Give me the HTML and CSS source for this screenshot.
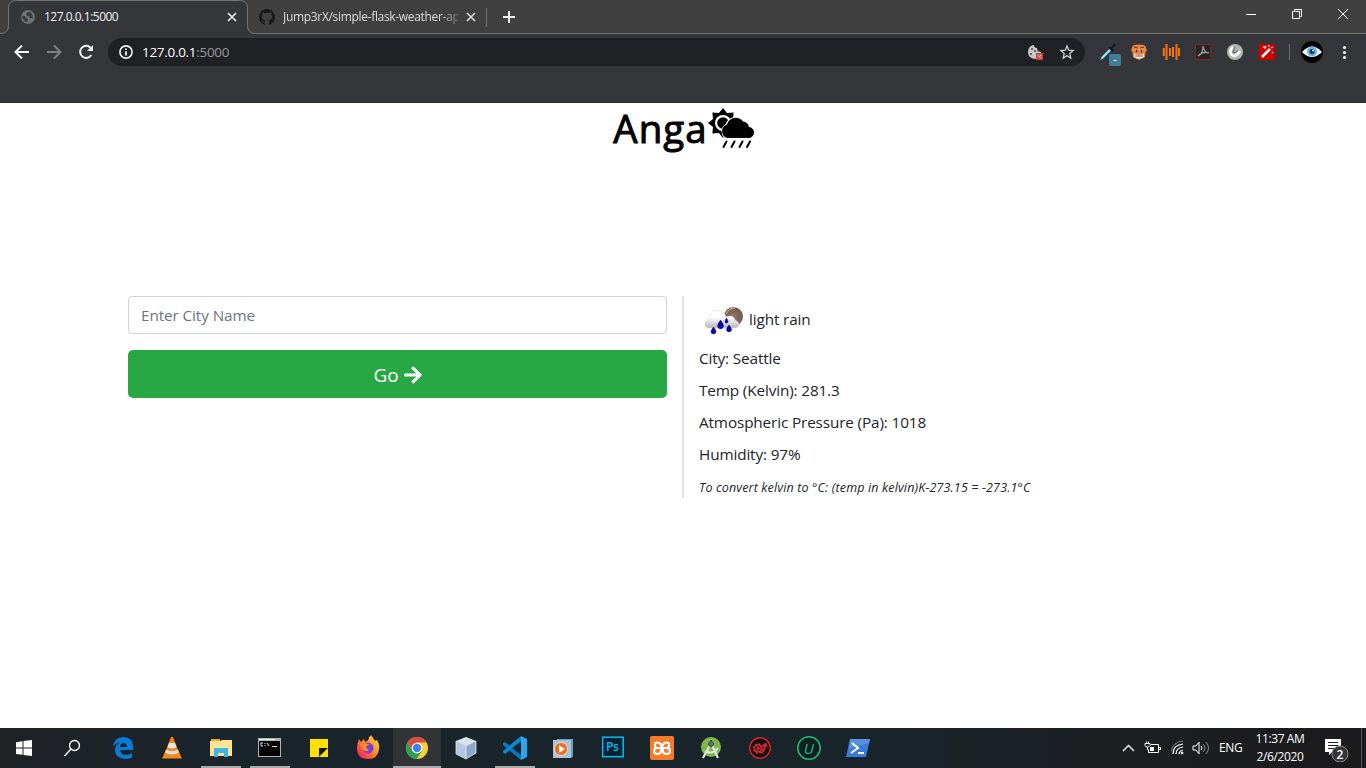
FILE: index.html
```html
<!DOCTYPE html>
<html lang="en">
<head>
<meta charset="utf-8">
<title>127.0.0.1:5000</title>
<link rel="stylesheet" href="styles.css">
</head>
<body>
<div class="screen">
  <header class="browser">
    <div class="tabs">
      <svg class="tab-line" width="1366" height="34" fill="none"><path d="M1 34q7.500-1 7.500-8.500V8q0-7.500 8-7.500h223q8 0 8 7.500v17.500q0 8 8 8V34Z" fill="#35363a"/><path d="M0 33.500h1q7.500 0 7.500-8V8q0-7.500 8-7.500h223q8 0 8 7.500v17.500q0 8 8 8h1111" stroke="#727470"/></svg>
      <div class="tab current">
        <svg class="favicon" width="16" height="16"><circle cx="8" cy="8" r="7" fill="#6e7074"/><path d="M2 7l3 0 1 2 2 1v2l-2 1-3-3-1-2M8 3l-2 2 1 2 2 0 1 2 3 0-1-4-2-2" fill="#3b3c40"/></svg>
        <span class="tab-title">127.0.0.1:5000</span>
        <svg class="close" width="10" height="10"><path d="M1 1l8 8M9 1l-8 8" stroke="#f1f3f4" stroke-width="1.700"/></svg>
      </div>
      <div class="tab second">
        <svg class="favicon" width="16" height="16" viewBox="0 0 16 16"><path fill="#191a1b" d="M8 0C3.580 0 0 3.580 0 8c0 3.540 2.290 6.530 5.470 7.590.4.070.55-.17.55-.38v-1.490c-2.010.37-2.530-.49-2.690-.94-.09-.23-.48-.94-.82-1.130-.28-.15-.68-.52-.01-.53.63-.01 1.080.58 1.230.82.72 1.210 1.870.87 2.330.66.07-.52.28-.87.51-1.070-1.780-.2-3.640-.89-3.640-3.950 0-.87.31-1.590.82-2.150-.08-.2-.36-1.020.08-2.120 0 0 .67-.21 2.200.82a7.600 7.600 0 0 1 4 0c1.530-1.040 2.200-.82 2.200-.82.44 1.100.16 1.920.08 2.120.51.56.82 1.270.82 2.150 0 3.070-1.870 3.750-3.650 3.950.29.25.54.73.54 1.480v2.190c0 .21.15.46.55.38A8 8 0 0 0 16 8c0-4.420-3.580-8-8-8z"/></svg>
        <span class="tab-title fade">Jump3rX/simple-flask-weather-ap</span>
        <svg class="close" width="10" height="10"><path d="M1 1l8 8M9 1l-8 8" stroke="#dadce0" stroke-width="1.600"/></svg>
      </div>
      <svg class="new-tab" width="12" height="12"><path d="M6 0v12M0 6h12" stroke="#eee" stroke-width="2"/></svg>
      <svg class="window-controls" width="106" height="14" fill="none" stroke="#fff"><path d="M1 7.500h10M47.500 4.500h7v7h-7zM49.500 4v-1.500h7v7H55M93 2l10 10M103 2L93 12"/></svg>
    </div>
    <div class="toolbar">
      <svg class="nav" width="108" height="36" fill="none" stroke-width="2"><path stroke="#f1f3f4" d="M29 18H17M22 11.500L15.500 18l6.500 6.500"/><path stroke="#808185" d="M47 18h12M54 11.500l6.500 6.500-6.500 6.500"/><path stroke="#f1f3f4" d="M91.300 21a6 6 0 1 1-.8-7.300"/><path fill="#f1f3f4" d="M93 11v6h-6z"/></svg>
      <div class="address">
        <svg width="14" height="14" fill="none" stroke="#f1f3f4"><circle cx="7" cy="7" r="6.100" stroke-width="1.600"/><path d="M7 6.200v4.300M7 3.500v1.600" stroke-width="1.800"/></svg>
        <span class="url">127.0.0.1<span>:5000</span></span>
        <svg class="address-icons" width="48" height="18"><path d="M7 2q0 3 3 3 0 3 4 4v4H9v3Q1 16 1 9 1 3 7 2Z" fill="#c9c9c9"/><g fill="#45464a"><circle cx="5" cy="6" r="1"/><circle cx="8" cy="8" r="1"/><circle cx="4" cy="11" r="1"/><circle cx="11" cy="8" r=".8"/></g><path fill="#e23e35" d="M9 10h7v7H9z"/><path d="M11 12l3 3m0-3l-3 3" stroke="#fff"/><path d="M40 3l1.700 4.200 4.500.4-3.400 3 1 4.500-3.800-2.400-3.800 2.400 1-4.500-3.400-3 4.500-.4Z" fill="none" stroke="#d0d1d4" stroke-width="1.300"/></svg>
      </div>
      <svg class="extensions" width="266" height="32">
        <path d="M2 22L10 14" stroke="#4db8e8" stroke-width="2.500"/><path d="M0 24l2-1 9-9-1-1-8 8Z" fill="#b8e6fa"/><path d="M9 11l4 4M11 13l4-5" stroke="#15191c" stroke-width="2"/><rect x="9" y="18" width="12" height="12" rx="2" fill="#437c99"/><path d="M13.500 24.500h3" stroke="#fff"/>
        <g><circle cx="33.500" cy="14" r="2.300" fill="#e98545"/><circle cx="44.500" cy="14" r="2.300" fill="#e98545"/><path d="M32 11l2-2q5-1 10 0l2 2-1 10-6 3-6-3Z" fill="#e9873e"/><path d="M34 18q5 2 10 0v3q-5 3-10 0Z" fill="#fff"/><path d="M35 20h8" stroke="#823919"/><path d="M35 13h3v3h-3zM40 13h3v3h-3z" fill="#f7d2a6"/><path d="M36 14h1v2h-1zM41 14h1v2h-1zM34 11l4 1m6-1l-4 1" stroke="#7f201a"/></g>
        <path d="M63.800 12v8M66.500 8v16M70 12v8M73 11v10M76.500 8v16M79 12v8" stroke="#f57213" stroke-width="2"/>
        <g fill="none"><path d="M95.500 8.500h15v15h-15z" fill="#2b2426" stroke="#792820"/><path d="M98 20q5-2 5-10 1 7 6 7-6-2-11 3" stroke="#a4a0a1" stroke-width="1.200"/></g>
        <circle cx="135" cy="16" r="8" fill="#b4b4b4"/><path d="M133 11q-4 3-2 7 4 5 9-3" fill="none" stroke="#fff" stroke-width="2.500"/><path d="M135 11l-2 5q2 2 5-2" fill="none" stroke="#707070" stroke-width="1.200"/>
        <path fill="#cb0000" d="M159 8h16v16h-16z"/><path d="M162 21l8-8" stroke="#fff" stroke-width="2.500"/><path d="M169 9v2M173 11l-2 1M172 16l1 1M163 11h2M166 10l-1 3" stroke="#ffdada" stroke-width="1.300"/>
        <path d="M189.500 8v16" stroke="#66686c"/><circle cx="212" cy="16" r="11" fill="#000"/><path d="M202 16q10-11 20 0-10 10-20 0" fill="#f6f8fb"/><circle cx="212" cy="15.500" r="5" fill="#65b6ef"/><circle cx="212" cy="15.500" r="2.500" fill="#183155"/><circle cx="213" cy="14.500" r="1" fill="#fff"/>
        <g fill="#f1f3f4"><circle cx="244.500" cy="11.500" r="1.600"/><circle cx="244.500" cy="16.500" r="1.600"/><circle cx="244.500" cy="21.500" r="1.600"/></g>
      </svg>
    </div>
  </header>

  <main class="page">
    <h1 class="brand"><span>Anga</span><svg width="46" height="42"><path d="M15 0l4.100 5 6.500-.6-.6 6.500 5 4.100-5 4.100.6 6.500-6.500-.6L15 30l-4.100-5-6.500.6.6-6.500L0 15l5-4.100-.6-6.500 6.500.6Z"/><circle cx="15" cy="15" r="8" fill="#fff"/><circle cx="15" cy="15" r="5.800"/><path d="M20 30a7 7 0 0 1-1-13 9 9 0 0 1 16-3 7 7 0 0 1 6 5 5.500 5.500 0 0 1-1 11Z" stroke="#fff" stroke-width="3"/><path d="M19.500 30a7 7 0 0 1-.5-13.500 9 9 0 0 1 16-3 7 7 0 0 1 6 5.500 5.500 5.500 0 0 1-1 11Z"/><path d="M18.500 33.500l-3 5.500M26.500 33.500l-3 5.500M34.500 33.500l-3 5.500M42 33.500L39 39" stroke="#000" stroke-width="2" stroke-linecap="round"/></svg></h1>
    <div class="columns">
      <form class="search-form">
        <input class="city-input" type="text" placeholder="Enter City Name" aria-label="City name">
        <button class="go" type="button"><span>Go</span><svg width="18" height="20" viewBox="0 0 448 512" fill="#fff"><path d="M190.500 66.900l22.200-22.200c9.400-9.400 24.600-9.400 33.900 0L441 239c9.400 9.400 9.400 24.600 0 33.900L246.600 467.300c-9.400 9.400-24.600 9.400-33.900 0l-22.200-22.200c-9.500-9.500-9.300-25 .4-34.300L311.400 296H24c-13.300 0-24-10.700-24-24v-32c0-13.300 10.700-24 24-24h287.400L190.900 101.200c-9.800-9.300-10-24.800-.4-34.300z"/></svg></button>
      </form>
      <section class="result">
        <div class="summary"><svg width="50" height="50"><defs><linearGradient id="cloud" x1="0" y1="0" x2="0" y2="1"><stop offset=".4" stop-color="#fff"/><stop offset="1" stop-color="#b5b5b5"/></linearGradient><radialGradient id="moon"><stop stop-color="#8e7566"/><stop offset="1" stop-color="#75594a"/></radialGradient></defs><circle cx="34.500" cy="20.500" r="9.500" fill="url(#moon)"/><path d="M27 18q3-6 9-6" fill="none" stroke="#d2c9c2"/><path d="M9 32q-4-1-3-5 1-4 4-4 1-7 7-9 8 0 10 7 7-3 9 3l3 2q2 3 0 5l-2 1Z" fill="url(#cloud)" stroke="#dedede" stroke-width=".7"/><g fill="#0000b8" stroke="#111155" stroke-width=".5"><path d="M14.500 31q5 6 0 7-5-1 0-7ZM21.500 24q6 8 0 9-6-1 0-9ZM27.500 22q3 5 0 5-3 0 0-5ZM30 29q5 6 0 7-5-1 0-7Z"/></g></svg><span>light rain</span></div>
        <p class="t-city">City: Seattle</p>
        <p class="t-temp">Temp (Kelvin): 281.3</p>
        <p class="t-pressure">Atmospheric Pressure (Pa): 1018</p>
        <p class="t-humidity">Humidity: 97%</p>
        <p class="note">To convert kelvin to °C: (temp in kelvin)K-273.15 = -273.1°C</p>
      </section>
    </div>
  </main>

  <footer class="taskbar">
    <div class="apps">
      <svg class="app" viewBox="0 0 48 40"><path fill="#fff" d="M15 14.200l6.500-.9v6.200H15zM22.500 13l8.500-1v7.500h-8.500zM15 20.500h6.500v6.200L15 26zM22.500 20.500H31V28l-8.500-1z"/></svg>
      <svg class="app" viewBox="0 0 48 40"><g fill="none" stroke="#fff" stroke-width="1.300"><circle cx="24.500" cy="17.500" r="5"/><path d="M21 21l-6.500 7"/></g></svg>
      <svg class="app" viewBox="0 0 48 40"><path fill="#087bd8" d="M14 19q1-10 10.500-10Q34 9 34 19v3H21q1 5 6 5 3 0 6-2v4.500Q30 31 26 31q-10-1-10-9 0-5 5-8-5 1-7 5Zm7 0h7q-.4-4-3.600-4-3 0-3.400 4Z"/></svg>
      <svg class="app" viewBox="0 0 48 40"><path d="M23 9h2l7 18q-8 4-16 0Z" fill="#f38610"/><path d="M21 15h6l1.500 4.500q-4.500 2-9 0Z" fill="#e5e5e5"/><path d="M17 24l-3 6.500h20L31 24q-7 4-14 0Z" fill="#f28b19"/><path d="M18 21.500q6 3 12 0l1 3q-7 4-14 0" fill="#ddd"/></svg>
      <svg class="app running" viewBox="0 0 48 40"><path fill="#e3ad26" d="M14 11h9v3h-9z"/><path fill="#ffe493" d="M13 13h10l2-1h10v16H13z"/><path d="M17 20h14v9h-4v-4h-6v4h-4z" fill="#38b7e8"/></svg>
      <svg class="app running" viewBox="0 0 48 40"><path fill="#aeb5b8" d="M12 10h23v19H12z"/><path fill="#050505" d="M13 13h21v15H13z"/><path fill="#f4f4f4" d="M13 11h16v1H13z"/><path fill="none" stroke="#ddd" d="M17 15h-2v3h2M19 15v1M19 17v1M21 15l2 3M26 18.500h5"/></svg>
      <svg class="app" viewBox="0 0 48 40"><path fill="#ffe000" d="M15 11h18v9l-9 9h-9z"/><path fill="#13171a" d="M24 20h9l-9 9z"/><path fill="#ffe000" d="M33 20v9h-9z"/></svg>
      <svg class="app" viewBox="0 0 48 40"><defs><linearGradient id="fire" x1="1" y1="0" x2="0" y2="1"><stop stop-color="#ffe43c"/><stop offset=".45" stop-color="#ff9028"/><stop offset=".8" stop-color="#ff3950"/><stop offset="1" stop-color="#e52480"/></linearGradient></defs><path fill="url(#fire)" d="M15 11l2 3 3-3 1 3q4-1 4-5 2-1 2-2 2 3 4 6l2-1q3 5 2 9-1 10-11 10-11 0-11-11 0-5 2-9Z"/><circle cx="24" cy="20" r="5.500" fill="#7840d5"/><path d="M16 16q6-2 10 1-4 0-4 3l3 2q-3 3-7-1Z" fill="#ff8b29"/></svg>
      <svg class="app running focused" viewBox="0 0 48 40"><circle cx="24" cy="20" r="11" fill="#f9cf36"/><path fill="#db4b3e" d="M14.500 14.500A11 11 0 0 1 33.500 14.500H24l-5 8Z"/><path fill="#299e57" d="M14.500 14.500A11 11 0 0 0 23.500 31L29 23q-5 5-10-.5Z"/><circle cx="24" cy="20" r="5.300" fill="#fff"/><circle cx="24" cy="20" r="4.200" fill="#4282ed"/></svg>
      <svg class="app" viewBox="0 0 48 40"><path fill="#d6e7e6" d="M24 9l10 4-10 5-10-5Z"/><path fill="#b5c8df" d="M14 13l10 5v13l-10-5Z"/><path fill="#8da9ca" d="M34 13l-10 5v13l10-6Z"/><path d="M14 13l10 5 10-5M24 18v13M14 13v13l10 5 10-6V13" fill="none" stroke="#e1ebf8" stroke-width=".8"/></svg>
      <svg class="app running" viewBox="0 0 48 40"><path fill="#0878c5" d="M12 15l2-1 16 13v5L12 17Z"/><path fill="#0b87d6" d="M12 24l2 2 16-13V8L12 23Z"/><path fill="#28a9ef" d="M30 8l6 3v18l-6 3Z"/></svg>
      <svg class="app" viewBox="0 0 48 40"><path fill="#6e9dbc" d="M17 11h16v18l-3 1V12H17z"/><path fill="#a7c6dc" d="M13 12h18v18H13z"/><circle cx="21" cy="21" r="6.500" fill="#f36b14" stroke="#d9dfdf"/><path d="M19 17l6 4-6 4Z" fill="#fff"/></svg>
      <svg class="app" viewBox="0 0 48 40"><rect x="13.700" y="9.200" width="20.500" height="19.500" fill="#062233" stroke="#08bcee" stroke-width="1.500"/><text x="17" y="23" class="ps">Ps</text></svg>
      <svg class="app" viewBox="0 0 48 40"><rect x="12" y="8" width="24" height="24" rx="2" fill="#f47b27"/><path d="M19.500 14.500q-3 0-2.500 3 0 2 2 2.500-3 .5-3 3 0 3 3.500 3t3.500-3q0-2 1-3 1 1 1 3 0 3 3.500 3t3.500-3q0-2.500-3-3 2-.5 2-2.500.5-3-2.500-3M21 15q3 1 3 5 0-4 3-5M20 20h8" fill="none" stroke="#fff" stroke-width="2.200" stroke-linecap="round" stroke-linejoin="round"/></svg>
      <svg class="app" viewBox="0 0 48 40"><circle cx="24" cy="19" r="10" fill="#7fb84b"/><path d="M16 30l7-13 2 0 6 13M18 23q8 4 13-3" fill="none" stroke="#e7e9e7" stroke-width="2"/><circle cx="24" cy="16" r="2.500" fill="#657164" stroke="#3e4f45"/><path d="M24 12v2" stroke="#42534a" stroke-width="2"/></svg>
      <svg class="app" viewBox="0 0 48 40"><circle cx="24" cy="20" r="10.200" fill="#140e13" stroke="#e0262b" stroke-width="1.400"/><circle cx="22" cy="20.500" r="3.300" fill="none" stroke="#e32b2c" stroke-width="1.300"/><circle cx="22" cy="20.500" r="4.500" fill="none" stroke="#e32b2c" stroke-width="1.500" stroke-dasharray="2 1.500"/><path d="M20.500 19l3 1.500-3 1.500M25 25q4-2 4-7" fill="none" stroke="#e32b2c" stroke-width="1.500"/><path d="M25.500 18.500l3.500-4 3 4Z" fill="#e32b2c"/></svg>
      <svg class="app" viewBox="0 0 48 40"><circle cx="24" cy="20" r="11.200" fill="#111f23" stroke="#20bd77" stroke-width="1.500"/><text x="18.800" y="25.500" class="uninstaller">U</text></svg>
      <svg class="app" viewBox="0 0 48 40"><path fill="#387bd8" d="M16 11h20l-4 18H12z"/><path fill="#598fdf" d="M16 11h20l-1 4-20 6z"/><path d="M18 15l6 5-7 5M24 25h6" fill="none" stroke="#fff" stroke-width="2"/></svg>
    </div>
    <div class="tray">
      <svg width="92" height="20" fill="none" stroke="#fff"><path d="M1 13l5.500-5.500L12 13" stroke-width="1.300"/><path d="M29 6.500h7.500v8h-10v-3M36.500 9.500h2v2h-2M24.500 3.500v2M26.500 3.500v2M23 5.500h5v2q-1 1.500-2.500 1.500-2.500 0-2.500-1.500ZM25.500 9v3"/><path fill="#fff" stroke="none" d="M28 9h4v4h-4z"/><path d="M51 16q0-9 10-10M54 16q0-6 7-7M57 16q0-3 4-4" stroke-width="1.200"/><path d="M49 13Q51 4 61 3" stroke="#818181"/><circle cx="60" cy="15" r="1" fill="#fff"/><path d="M71 8h3l3-4v12l-3-4h-3zM79 8q2 2 0 4"/><path d="M81 6q4 4 0 8M84 4q5 6 0 12" stroke="#8b8b8b"/></svg>
      <span class="lang">ENG</span>
      <div class="clock"><span>11:37 AM</span><span>2/6/2020</span></div>
      <svg class="notices" width="28" height="28"><path d="M2 5h16v13H9l-3 3v-3H2z" fill="#fff"/><path d="M5 8.500h10M5 11.500h10M5 14.500h6" stroke="#222"/><circle cx="17" cy="20" r="8" fill="#343536" stroke="#8b8b8b"/><text x="13.500" y="24.500" class="badge">2</text></svg>
    </div>
  </footer>
</div>
</body>
</html>
```
FILE: styles.css
```css
* { box-sizing: border-box; }
body { margin: 0; overflow: hidden; font-family: "Open Sans", "Noto Sans", sans-serif; color: #212529; }
svg { display: block; flex-shrink: 0; }
.screen { display: flex; flex-direction: column; width: 1366px; height: 768px; background: #fff; }
.browser { height: 103px; flex-shrink: 0; background: #35363a; border-bottom: 1px solid #272629; }
.tabs { position: relative; display: flex; align-items: center; height: 34px; background: #404040; }
.tab-line { position: absolute; left: 0; top: 0; }
.tab { position: relative; display: flex; align-items: center; height: 34px; }
.current { width: 248px; padding-left: 20px; color: #f3f4f5; }
.second { width: 239px; padding-left: 11px; color: #dadce0; }
.second::after { content: ""; position: absolute; right: 0; top: 8px; width: 1px; height: 19px; background: #727272; }
.tab-title { margin-left: 8px; padding-bottom: 1px; font-size: 12px; white-space: nowrap; }
.current .tab-title { width: 183px; letter-spacing: -.5px; }
.fade { width: 175px; letter-spacing: -.32px; -webkit-mask-image: linear-gradient(90deg, #000 90%, rgba(0,0,0,.25) 100%); mask-image: linear-gradient(90deg, #000 90%, rgba(0,0,0,.25) 100%); }
.second .close { margin-left: 8px; }
.new-tab { margin-left: 16px; }
.window-controls { margin-left: auto; margin-right: 15px; margin-bottom: 6px; }
.toolbar { display: flex; align-items: center; height: 36px; }
.address { display: flex; align-items: center; width: 977px; height: 28px; padding: 0 10px 0 11px; border-radius: 14px; background: #202124; }
.url { margin-left: 9px; padding-bottom: 1px; color: #fff; font-size: 13.500px; letter-spacing: -.3px; }
.url span { color: #989a9e; }
.address-icons { margin-left: auto; }
.extensions { margin-left: 15px; }
.page { height: 625px; flex-shrink: 0; }
.brand { display: flex; justify-content: center; align-items: flex-start; height: 193px; margin: 0; padding-left: 1px; color: #000; font-size: 38.500px; font-weight: 500; line-height: 48px; letter-spacing: 1px; }
.brand span { padding-top: 1px; -webkit-text-stroke: 1px #000; }
.brand svg { margin-top: 5px; }
.columns { display: flex; padding-left: 128px; }
.search-form { display: flex; flex-direction: column; gap: 16px; width: 539px; }
.city-input { width: 100%; height: 38px; padding: 6px 12px; border: 1px solid #ced4da; border-radius: 4px; outline: 0; background: #fff; color: #495057; font-family: inherit; font-size: 15.300px; letter-spacing: -.1px; }
.city-input::placeholder { color: #6c757d; opacity: 1; }
.go { display: flex; align-items: center; justify-content: center; gap: 5px; height: 48px; padding: 1px 0 0; border: 0; border-radius: 5px; background: #28a745; color: #fff; font-family: inherit; font-size: 19px; }
.result { height: 202px; margin-left: 15px; padding-left: 15px; border-left: 2px solid #dee2e6; font-size: 15.300px; line-height: 24px; white-space: nowrap; letter-spacing: -.13px; }
.summary { display: flex; align-items: center; height: 50px; }
.summary span { padding-bottom: 4px; }
.result p { height: 24px; margin: 0 0 8px; }
.result .note { margin: 0; padding-top: 1.500px; font-size: 12.500px; font-style: italic; letter-spacing: .15px; }
.taskbar { display: flex; justify-content: space-between; height: 40px; flex-shrink: 0; background: linear-gradient(90deg, #202225 0, #19242b 18%, #19242b 65%, #1d1e20 85%, #1b1b1d); color: #fff; }
.apps { display: flex; gap: 1px; padding-left: 1px; }
.app { width: 48px; height: 40px; }
.running { background: linear-gradient(#aaa, #aaa) 4px 38px / 40px 2px no-repeat; }
.focused { background: linear-gradient(#aaa, #aaa) 0 38px / 48px 2px no-repeat, #303437; }
.ps { fill: #08bcee; font: 600 12px "Open Sans", sans-serif; letter-spacing: -.5px; }
.uninstaller { fill: #20bd77; font: italic 15px "Open Sans", sans-serif; }
.tray { display: flex; align-items: center; width: 244px; border-right: 1px solid #555; margin-right: 4px; padding-left: 4px; font-size: 12px; }
.lang { width: 25px; margin-left: 5px; padding-bottom: 1px; letter-spacing: -.3px; }
.clock { display: flex; flex-direction: column; align-items: center; width: 56px; margin-left: 8px; line-height: 18px; letter-spacing: -.4px; white-space: nowrap; }
.notices { margin-left: 15px; }
.badge { fill: #fff; font: 600 12px "Open Sans", sans-serif; }
```
